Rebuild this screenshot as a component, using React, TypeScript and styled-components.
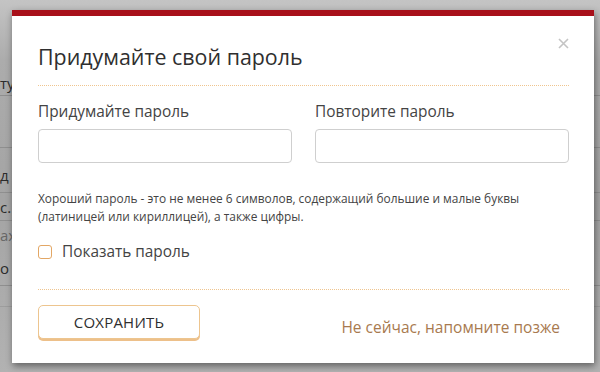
import React from 'react'
import styled, { createGlobalStyle } from 'styled-components'

const GlobalStyle = createGlobalStyle`
  html, body {
    margin: 0;
    padding: 0;
  }
  body {
    width: 600px;
    height: 372px;
    overflow: hidden;
    font-family: 'Open Sans', 'Noto Sans', 'Liberation Sans', sans-serif;
    background: #a9a9a9;
  }
`

const Screen = styled.div`
  position: relative;
  width: 600px;
  height: 372px;
  overflow: hidden;
  background: linear-gradient(180deg, #c4c4c4 0px, #acacac 60px, #a4a4a4 200px, #b2b2b2 372px);
`

const Page = styled.div`
  display: flex;
  flex-direction: column;
  padding-top: 70px;
`

const PageRow = styled.div<{ $h: number; $pt?: number; $faint?: boolean; $line?: string }>`
  height: ${(p) => p.$h}px;
  box-sizing: border-box;
  padding-top: ${(p) => p.$pt ?? 0}px;
  display: flex;
  align-items: center;
  font-size: 15px;
  color: ${(p) => (p.$faint ? '#676767' : '#2c2c2c')};
  border-bottom: 1px solid ${(p) => p.$line ?? 'transparent'};
  white-space: nowrap;
`

const Modal = styled.div`
  position: absolute;
  left: 12px;
  top: 10px;
  width: 582px;
  height: 353px;
  box-sizing: border-box;
  background: #fff;
  border-top: 6px solid #a8101a;
  box-shadow: 1px 3px 7px rgba(0, 0, 0, 0.45);
  padding: 0 25px 0 26px;
  display: flex;
  flex-direction: column;
`

const Header = styled.div`
  display: flex;
  align-items: flex-start;
  justify-content: space-between;
  padding-top: 27px;
  padding-bottom: 14px;
  border-bottom: 1px dotted #efc58f;
`

const Title = styled.h2`
  margin: 0;
  font-size: 21.4px;
  font-weight: 400;
  line-height: 28px;
  color: #2f2f2f;
`

const Close = styled.button`
  border: none;
  background: none;
  padding: 0;
  margin: -10px -4px 0 0;
  width: 20px;
  height: 20px;
  display: flex;
  align-items: center;
  justify-content: center;
  cursor: pointer;
`

const Fields = styled.div`
  display: grid;
  grid-template-columns: 1fr 1fr;
  column-gap: 23px;
  padding-top: 16px;
`

const Field = styled.label`
  display: flex;
  flex-direction: column;
`

const Label = styled.span`
  font-size: 15.4px;
  line-height: 20px;
  color: #444;
  margin-bottom: 7px;
`

const Input = styled.input`
  height: 34px;
  box-sizing: border-box;
  border: 1px solid #cfcfcf;
  border-radius: 4px;
  font: inherit;
  padding: 0 10px;
  outline: none;
`

const Hint = styled.p`
  margin: 26px 0 0;
  font-size: 11.9px;
  line-height: 18px;
  color: #444;
`

const CheckRow = styled.label`
  display: flex;
  align-items: center;
  gap: 10px;
  margin-top: 17px;
  font-size: 15.4px;
  color: #444;
  line-height: 20px;
  padding-bottom: 27px;
  border-bottom: 1px dotted #efc58f;
`

const Box = styled.span`
  width: 14px;
  height: 14px;
  box-sizing: border-box;
  border: 1px solid #e3a765;
  border-radius: 3px;
`

const Footer = styled.div`
  display: flex;
  align-items: center;
  justify-content: space-between;
  padding-top: 15px;
  padding-right: 9px;
`

const SaveButton = styled.button`
  width: 162px;
  height: 34px;
  box-sizing: border-box;
  background: #fff;
  border: 1px solid #edc58f;
  border-radius: 5px;
  box-shadow: 0 2px 0 #edc08a;
  font-family: inherit;
  font-size: 15px;
  color: #2f2f2f;
  letter-spacing: 0.2px;
  cursor: pointer;
`

const Later = styled.a`
  font-size: 15.5px;
  color: #a87a4f;
  text-decoration: none;
  margin-top: 10px;
  cursor: pointer;
`

export default function App() {
  return (
    <>
      <GlobalStyle />
      <Screen>
        <Page>
          <PageRow $h={26} $line="#8f8f8f">ту</PageRow>
          <PageRow $h={52} $line="#8f8f8f" />
          <PageRow $h={45} $pt={10} $line="#8f8f8f">д</PageRow>
          <PageRow $h={28} $line="#8f8f8f">с.</PageRow>
          <PageRow $h={29} $faint>ах</PageRow>
          <PageRow $h={36} $line="#8f8f8f">о в</PageRow>
          <PageRow $h={21} $line="#9d9d9d" />
        </Page>
        <Modal>
          <Header>
            <Title>Придумайте свой пароль</Title>
            <Close aria-label="Закрыть">
              <svg width="11" height="11" viewBox="0 0 11 11">
                <path d="M1 1L10 10M10 1L1 10" stroke="#c4c4c4" strokeWidth="1.6" />
              </svg>
            </Close>
          </Header>
          <Fields>
            <Field>
              <Label>Придумайте пароль</Label>
              <Input type="password" />
            </Field>
            <Field>
              <Label>Повторите пароль</Label>
              <Input type="password" />
            </Field>
          </Fields>
          <Hint>
            Хороший пароль - это не менее 6 символов, содержащий большие и малые буквы
            <br />
            (латиницей или кириллицей), а также цифры.
          </Hint>
          <CheckRow>
            <Box />
            Показать пароль
          </CheckRow>
          <Footer>
            <SaveButton>СОХРАНИТЬ</SaveButton>
            <Later>Не сейчас, напомните позже</Later>
          </Footer>
        </Modal>
      </Screen>
    </>
  )
}
